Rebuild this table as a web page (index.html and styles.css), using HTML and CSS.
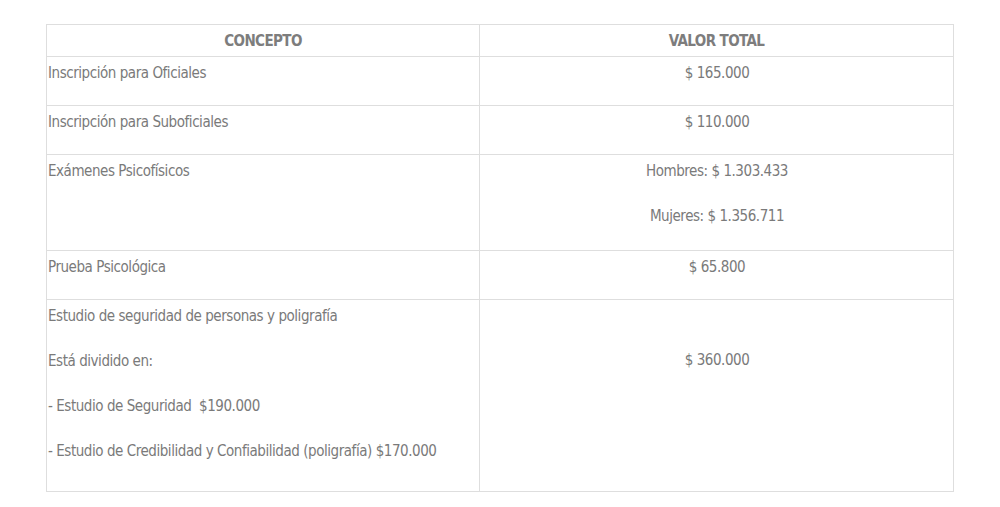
FILE: index.html
```html
<!DOCTYPE html>
<html lang="es">
<head>
<meta charset="utf-8">
<title>Costos</title>
<link rel="stylesheet" href="styles.css">
</head>
<body>
<div class="page">
  <table class="costs">
    <thead>
      <tr class="head-row">
        <th class="col-concept">CONCEPTO</th>
        <th class="col-value">VALOR TOTAL</th>
      </tr>
    </thead>
    <tbody>
      <tr class="row-1">
        <td><p>Inscripción para Oficiales</p></td>
        <td class="value"><p>$ 165.000</p></td>
      </tr>
      <tr class="row-1">
        <td><p>Inscripción para Suboficiales</p></td>
        <td class="value"><p>$ 110.000</p></td>
      </tr>
      <tr class="row-2">
        <td><p>Exámenes Psicofísicos</p></td>
        <td class="value"><p>Hombres: $ 1.303.433</p><p>Mujeres: $ 1.356.711</p></td>
      </tr>
      <tr class="row-1">
        <td><p>Prueba Psicológica</p></td>
        <td class="value"><p>$ 65.800</p></td>
      </tr>
      <tr class="row-4">
        <td>
          <p>Estudio de seguridad de personas y poligrafía</p>
          <p>Está dividido en:</p>
          <p>- Estudio de Seguridad&nbsp; $190.000</p>
          <p>- Estudio de Credibilidad y Confiabilidad (poligrafía) $170.000</p>
        </td>
        <td class="value value-mid"><p>$ 360.000</p></td>
      </tr>
    </tbody>
  </table>
</div>
</body>
</html>
```

FILE: styles.css
```css
html, body {
  margin: 0;
  padding: 0;
  background: #ffffff;
}

.page {
  padding: 24px 0 0 46px;
}

.costs {
  border-collapse: collapse;
  width: 908px;
  table-layout: fixed;
  font-family: "DejaVu Sans Condensed", "DejaVu Sans", sans-serif;
  font-stretch: condensed;
  color: #7a7a7a;
  font-size: 15px;
  letter-spacing: -0.45px;
}

.costs th,
.costs td {
  border: 1px solid #dedede;
}

.col-concept {
  width: 432px;
}

.costs th {
  height: 31px;
  padding: 0;
  font-weight: bold;
  text-align: center;
  vertical-align: middle;
  font-size: 15px;
  letter-spacing: -0.6px;
  color: #7d7d7d;
}

.costs td {
  padding: 3px 0 0 1px;
  vertical-align: top;
  text-align: left;
}

.costs p {
  margin: 0 0 19px;
  line-height: 26px;
  white-space: nowrap;
}

.costs td.value {
  text-align: center;
}

.row-1 td { height: 45px; }
.row-2 td { height: 92px; }
.row-4 td { height: 188px; }

.costs td.value-mid {
  padding-top: 47px;
  height: 144px;
}
```
